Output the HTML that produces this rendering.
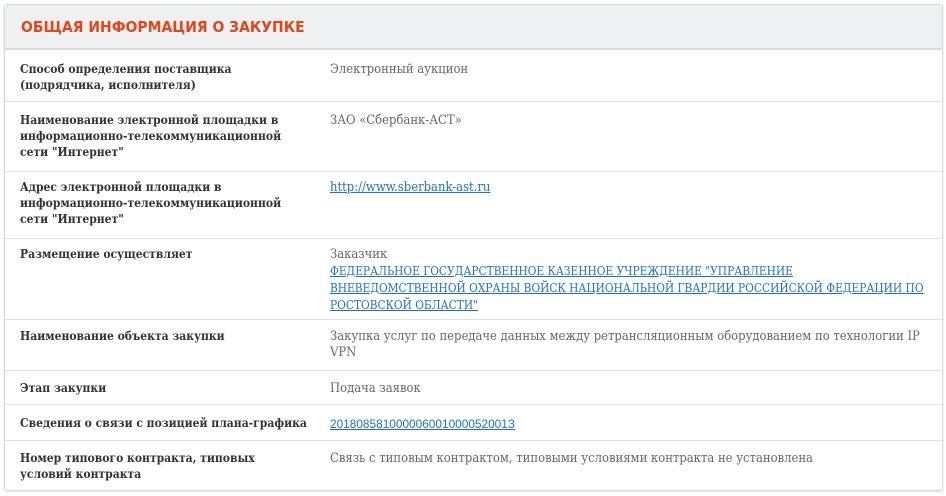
<!DOCTYPE html>
<html><head><meta charset="utf-8"><style>
*{margin:0;padding:0;box-sizing:border-box}
body{width:946px;height:496px;background:#fff;font-family:"DejaVu Serif Condensed","DejaVu Serif","Liberation Serif",serif;font-size:12px;position:relative;overflow:hidden}
.card{position:absolute;left:4px;top:4px;width:939px;height:487px;border:1px solid #d5d8dc;border-radius:3px;box-shadow:0 1px 2px rgba(0,0,0,.12)}
.hd{position:absolute;left:0;top:0;right:0;height:45px;background:#eef0f2;border-bottom:2px solid #d8dbdf}
.hd span{position:absolute;left:16px;top:13px;color:#e2471c;font-weight:bold;font-size:15.5px;font-family:"DejaVu Sans Condensed","Liberation Sans",sans-serif}
.l{position:absolute;left:20px;font-weight:bold;color:#333;line-height:16px;width:280px}
.r{position:absolute;left:330px;color:#666;line-height:16px;width:610px;white-space:nowrap;font-size:12.9px;margin-top:1px}
.sep{position:absolute;left:5px;width:937px;height:1px;background:#e0e2e5}
a{color:#1a73c9;text-decoration:underline}
.r a.c{font-size:11.8px}
.sans{font-family:"Liberation Sans",sans-serif;font-size:11.85px}
</style></head><body>
<div class="card"><div class="hd"><span>ОБЩАЯ ИНФОРМАЦИЯ О ЗАКУПКЕ</span></div></div>
<div class="l" style="top:61px">Способ определения поставщика<br>(подрядчика, исполнителя)</div>
<div class="r" style="top:61px">Электронный аукцион</div>
<div class="sep" style="top:101px"></div>
<div class="l" style="top:112px">Наименование электронной площадки в информационно-телекоммуникационной сети "Интернет"</div>
<div class="r" style="top:112px">ЗАО «Сбербанк-АСТ»</div>
<div class="sep" style="top:171px"></div>
<div class="l" style="top:179px">Адрес электронной площадки в информационно-телекоммуникационной сети "Интернет"</div>
<div class="r" style="top:179px"><a>http://www.sberbank-ast.ru</a></div>
<div class="sep" style="top:238px"></div>
<div class="l" style="top:246px">Размещение осуществляет</div>
<div class="r" style="top:246px">Заказчик<br><a class="c">ФЕДЕРАЛЬНОЕ ГОСУДАРСТВЕННОЕ КАЗЕННОЕ УЧРЕЖДЕНИЕ "УПРАВЛЕНИЕ<br>ВНЕВЕДОМСТВЕННОЙ ОХРАНЫ ВОЙСК НАЦИОНАЛЬНОЙ ГВАРДИИ РОССИЙСКОЙ ФЕДЕРАЦИИ ПО<br>РОСТОВСКОЙ ОБЛАСТИ"</a></div>
<div class="sep" style="top:319px"></div>
<div class="l" style="top:328px">Наименование объекта закупки</div>
<div class="r" style="top:328px">Закупка услуг по передаче данных между ретрансляционным оборудованием по технологии IP<br>VPN</div>
<div class="sep" style="top:370px"></div>
<div class="l" style="top:380px">Этап закупки</div>
<div class="r" style="top:380px">Подача заявок</div>
<div class="sep" style="top:404px"></div>
<div class="l" style="top:415px;width:300px">Сведения о связи с позицией плана-графика</div>
<div class="r sans" style="top:415px"><a>201808581000006001000052001З</a></div>
<div class="sep" style="top:440px"></div>
<div class="l" style="top:450px">Номер типового контракта, типовых<br>условий контракта</div>
<div class="r" style="top:450px">Связь с типовым контрактом, типовыми условиями контракта не установлена</div>
</body></html>
